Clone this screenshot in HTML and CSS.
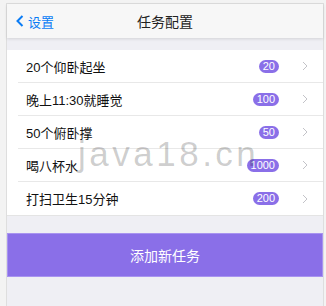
FILE: index.html
```html
<!DOCTYPE html>
<html>

	<head>
		<meta charset="UTF-8">
		<title>任务配置</title>
		<link rel="stylesheet" href="styles.css">
	</head>

	<body>
		<div id="app">
			<div class="navBar">
				<a class="navBack" href="#">
					<svg width="8" height="12" viewBox="0 0 8 12"><polyline points="6.5,1 1.5,6 6.5,11" fill="none" stroke="#0a7cf5" stroke-width="2"/></svg>
					<span>设置</span>
				</a>
				<div class="navTitle">任务配置</div>
			</div>

			<ul class="taskList">
				<li class="taskItem">
					<span class="taskName">20个仰卧起坐</span>
					<span class="taskBadge">20</span>
					<svg class="taskArrow" width="6" height="10" viewBox="0 0 6 10"><polyline points="1,1 5,5 1,9" fill="none" stroke="#c3c3c8" stroke-width="1"/></svg>
				</li>
				<li class="taskItem">
					<span class="taskName">晚上11:30就睡觉</span>
					<span class="taskBadge">100</span>
					<svg class="taskArrow" width="6" height="10" viewBox="0 0 6 10"><polyline points="1,1 5,5 1,9" fill="none" stroke="#c3c3c8" stroke-width="1"/></svg>
				</li>
				<li class="taskItem">
					<span class="taskName">50个俯卧撑</span>
					<span class="taskBadge">50</span>
					<svg class="taskArrow" width="6" height="10" viewBox="0 0 6 10"><polyline points="1,1 5,5 1,9" fill="none" stroke="#c3c3c8" stroke-width="1"/></svg>
				</li>
				<li class="taskItem">
					<span class="taskName">喝八杯水</span>
					<span class="taskBadge">1000</span>
					<svg class="taskArrow" width="6" height="10" viewBox="0 0 6 10"><polyline points="1,1 5,5 1,9" fill="none" stroke="#c3c3c8" stroke-width="1"/></svg>
				</li>
				<li class="taskItem">
					<span class="taskName">打扫卫生15分钟</span>
					<span class="taskBadge">200</span>
					<svg class="taskArrow" width="6" height="10" viewBox="0 0 6 10"><polyline points="1,1 5,5 1,9" fill="none" stroke="#c3c3c8" stroke-width="1"/></svg>
				</li>
			</ul>

			<button class="btnAdd">添加新任务</button>

			<div class="watermark">java18.cn</div>
		</div>
	</body>

</html>
```

FILE: styles.css
```css
body {
	background: #f3f3f3;
	margin: 0;
	font-family: "Liberation Sans", "Noto Sans CJK SC", sans-serif;
}

#app {
	position: relative;
	margin: 3px 2px 0 6px;
	height: 303px;
	box-sizing: border-box;
	border: 1px solid #dedede;
	border-bottom: none;
	background: #efeff4;
}

.navBar {
	position: relative;
	height: 34px;
	background: #f7f7f7;
	box-shadow: 0 1px 3px rgba(0, 0, 0, 0.12);
	display: flex;
	align-items: center;
	justify-content: center;
}

.navBack {
	position: absolute;
	left: 9px;
	top: 0;
	height: 34px;
	display: flex;
	align-items: center;
	gap: 4px;
	color: #0a7cf5;
	font-size: 13px;
	text-decoration: none;
}

.navTitle {
	font-size: 14px;
	color: #222;
}

.taskList {
	list-style: none;
	margin: 12px 0 0;
	padding: 0 0 0 11px;
	background: #fff;
	border-bottom: 1px solid #e4e4e4;
}

.taskItem {
	height: 32px;
	display: flex;
	align-items: center;
	padding-right: 15px;
	border-bottom: 1px solid #e8e8e8;
}

.taskItem:last-child {
	border-bottom: none;
	height: 33px;
}

.taskName {
	flex: 1;
	padding-left: 8px;
	font-size: 13px;
	color: #111;
}

.taskBadge {
	height: 13px;
	line-height: 13px;
	padding: 0 4px;
	border-radius: 7px;
	background: #8a6fe8;
	color: #fff;
	font-size: 11px;
}

.taskArrow {
	margin-left: 23px;
}

.btnAdd {
	display: block;
	width: 100%;
	height: 44px;
	margin-top: 17px;
	border: 1px solid #a893f0;
	background: #8a6fe8;
	color: #fff;
	font-family: inherit;
	font-size: 14px;
}

.watermark {
	position: absolute;
	left: 71px;
	top: 130px;
	font-size: 35px;
	letter-spacing: 3.5px;
	color: rgba(0, 0, 0, 0.2);
	pointer-events: none;
}
```
